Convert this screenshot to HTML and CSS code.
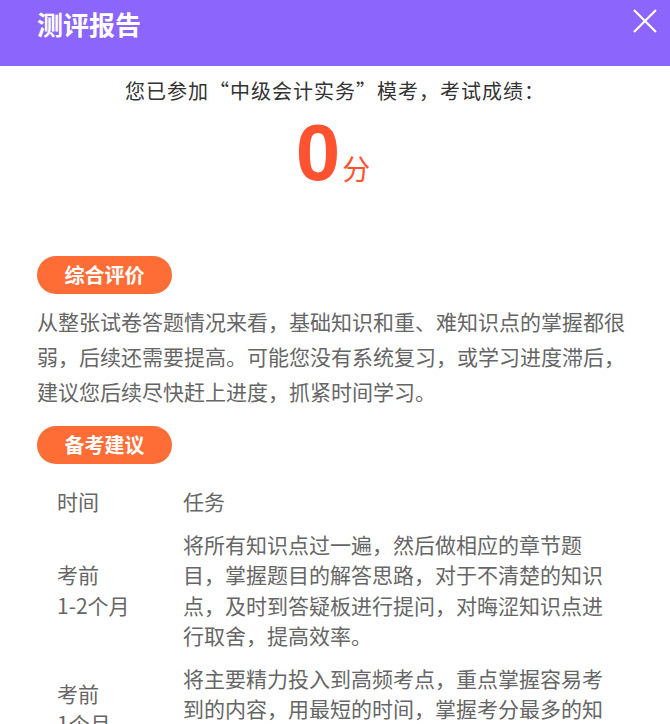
FILE: index.html
```html
<!DOCTYPE html>
<html lang="zh-CN">
<head>
<meta charset="utf-8">
<title>测评报告</title>
<link rel="stylesheet" href="styles.css">
</head>
<body>
<div class="page">
  <header class="topbar">
    <h1 class="title">测评报告</h1>
    <span class="close" aria-label="关闭">
      <svg width="24" height="24" viewBox="0 0 24 24"><path d="M1 1 L23 23 M23 1 L1 23" stroke="#fff" stroke-width="2.2" fill="none"/></svg>
    </span>
  </header>
  <main class="content">
    <p class="intro">您已参加“中级会计实务”模考，考试成绩：</p>
    <div class="score"><span class="num">0</span><span class="unit">分</span></div>

    <div class="tag">综合评价</div>
    <p class="desc">从整张试卷答题情况来看，基础知识和重、难知识点的掌握都很弱，后续还需要提高。可能您没有系统复习，或学习进度滞后，建议您后续尽快赶上进度，抓紧时间学习。</p>

    <div class="tag tag2">备考建议</div>
    <div class="plan">
      <div class="cell time head">时间</div>
      <div class="cell task head">任务</div>
      <div class="cell time">考前<br>1-2个月</div>
      <div class="cell task">将所有知识点过一遍，然后做相应的章节题目，掌握题目的解答思路，对于不清楚的知识点，及时到答疑板进行提问，对晦涩知识点进行取舍，提高效率。</div>
      <div class="cell time">考前<br>1个月</div>
      <div class="cell task">将主要精力投入到高频考点，重点掌握容易考到的内容，用最短的时间，掌握考分最多的知识点，提高应试能力。</div>
    </div>
  </main>
</div>
</body>
</html>
```
FILE: styles.css
```css
html, body {
  margin: 0;
  padding: 0;
  background: #fff;
}
body {
  font-family: "Microsoft YaHei", "Noto Sans CJK SC", "Open Sans", sans-serif;
  overflow: hidden;
}
.page {
  width: 670px;
}
.topbar {
  height: 66px;
  background: #8c66fc;
  display: flex;
  align-items: flex-start;
  justify-content: space-between;
  padding: 0 13px 0 37px;
  box-sizing: border-box;
}
.title {
  margin: 0;
  font-size: 26px;
  line-height: 47px;
  font-weight: 700;
  color: #fff;
  letter-spacing: 0;
}
.close {
  display: flex;
  margin-top: 9px;
}
.content {
  padding: 0 37px;
}
.intro {
  margin: 11px 0 0;
  text-align: center;
  font-size: 20px;
  line-height: 28px;
  letter-spacing: 1px;
  color: #333;
}
.score {
  display: flex;
  justify-content: center;
  align-items: baseline;
  height: 96px;
  margin-left: -4px;
  color: #ff5230;
}
.num {
  font-family: "Liberation Sans", Arial, sans-serif;
  font-weight: 700;
  font-size: 80px;
  line-height: 96px;
}
.unit {
  font-size: 28px;
  margin-left: 2px;
}
.tag {
  margin-top: 55px;
  width: 135px;
  height: 38px;
  border-radius: 19px;
  background: #ff6d37;
  color: #fff;
  font-size: 20px;
  font-weight: 700;
  line-height: 38px;
  text-align: center;
}
.tag2 {
  margin-top: 17px;
}
.desc {
  margin: 10px 0 0;
  font-size: 21px;
  line-height: 35px;
  color: #666;
}
.plan {
  margin: 16px 0 0 20px;
  display: grid;
  grid-template-columns: 126px 422px;
}
.cell {
  padding: 6px 0;
  font-size: 21px;
  line-height: 30.5px;
  color: #666;
}
.time {
  display: flex;
  align-items: center;
}
```
